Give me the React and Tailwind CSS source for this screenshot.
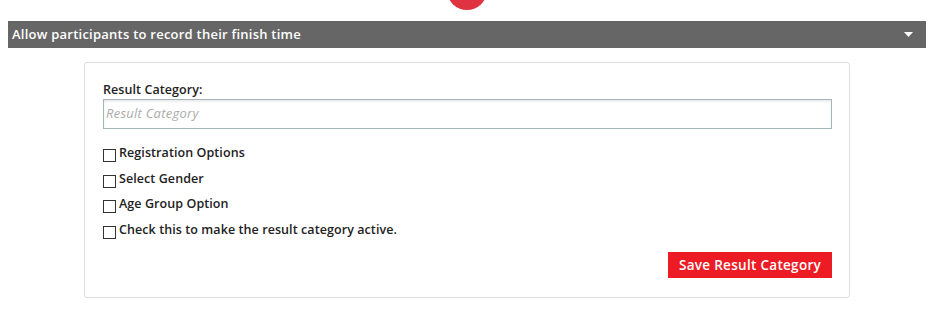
export default function App() {
  const opts = [
    "Registration Options",
    "Select Gender",
    "Age Group Option",
    "Check this to make the result category active.",
  ];
  return (
    <div className="relative w-[937px] h-[329px] bg-white overflow-hidden" style={{ fontFamily: '"Open Sans", "DejaVu Sans", sans-serif' }}>
      <div className="absolute left-[447px] top-[-30px] w-[40px] h-[40px] rounded-full bg-[#e03342]" />
      <div className="pt-[21px] pl-[8px]">
        <div className="w-[918px] h-[27px] bg-[#666666] flex items-center justify-between pl-[4px] pr-[13px]">
          <span className="text-white text-[13px] font-semibold tracking-[0.24px]">Allow participants to record their finish time</span>
          <svg width="9" height="5" viewBox="0 0 9 5"><path d="M0 0H9L4.5 5Z" fill="#fff" /></svg>
        </div>
      </div>
      <div className="ml-[84px] mt-[14px] w-[766px] h-[236px] border border-[#dddddd] rounded-[3px] pl-[18px] pr-[17px] pt-[19px]">
        <div className="text-[12.5px] font-semibold text-[#222] leading-[16px] tracking-[0.08px]">Result Category:</div>
        <div className="mt-[1px] w-full h-[30px] border border-[#a3b5b8] shadow-[inset_0_2px_2px_rgba(0,0,0,0.08)] flex items-center px-[2px]">
          <span className="italic text-[13px] text-[#aaaaaa] tracking-[0.25px]">Result Category</span>
        </div>
        <div className="mt-[20px] flex flex-col gap-[12.7px]">
          {opts.map((o) => (
            <div key={o} className="flex items-end h-[13px]">
              <div className="w-[13px] h-[13px] border border-[#333] bg-white shrink-0" />
              <span className="ml-[3px] text-[12.5px] font-semibold text-[#222] leading-[14px] tracking-[0.08px] relative top-[-2px] whitespace-nowrap">{o}</span>
            </div>
          ))}
        </div>
        <div className="flex justify-end mt-[13px]">
          <div className="w-[164px] h-[26px] bg-[#ed1c24] text-white text-[13.5px] font-semibold tracking-[0.3px] flex items-center justify-center">Save Result Category</div>
        </div>
      </div>
    </div>
  );
}
